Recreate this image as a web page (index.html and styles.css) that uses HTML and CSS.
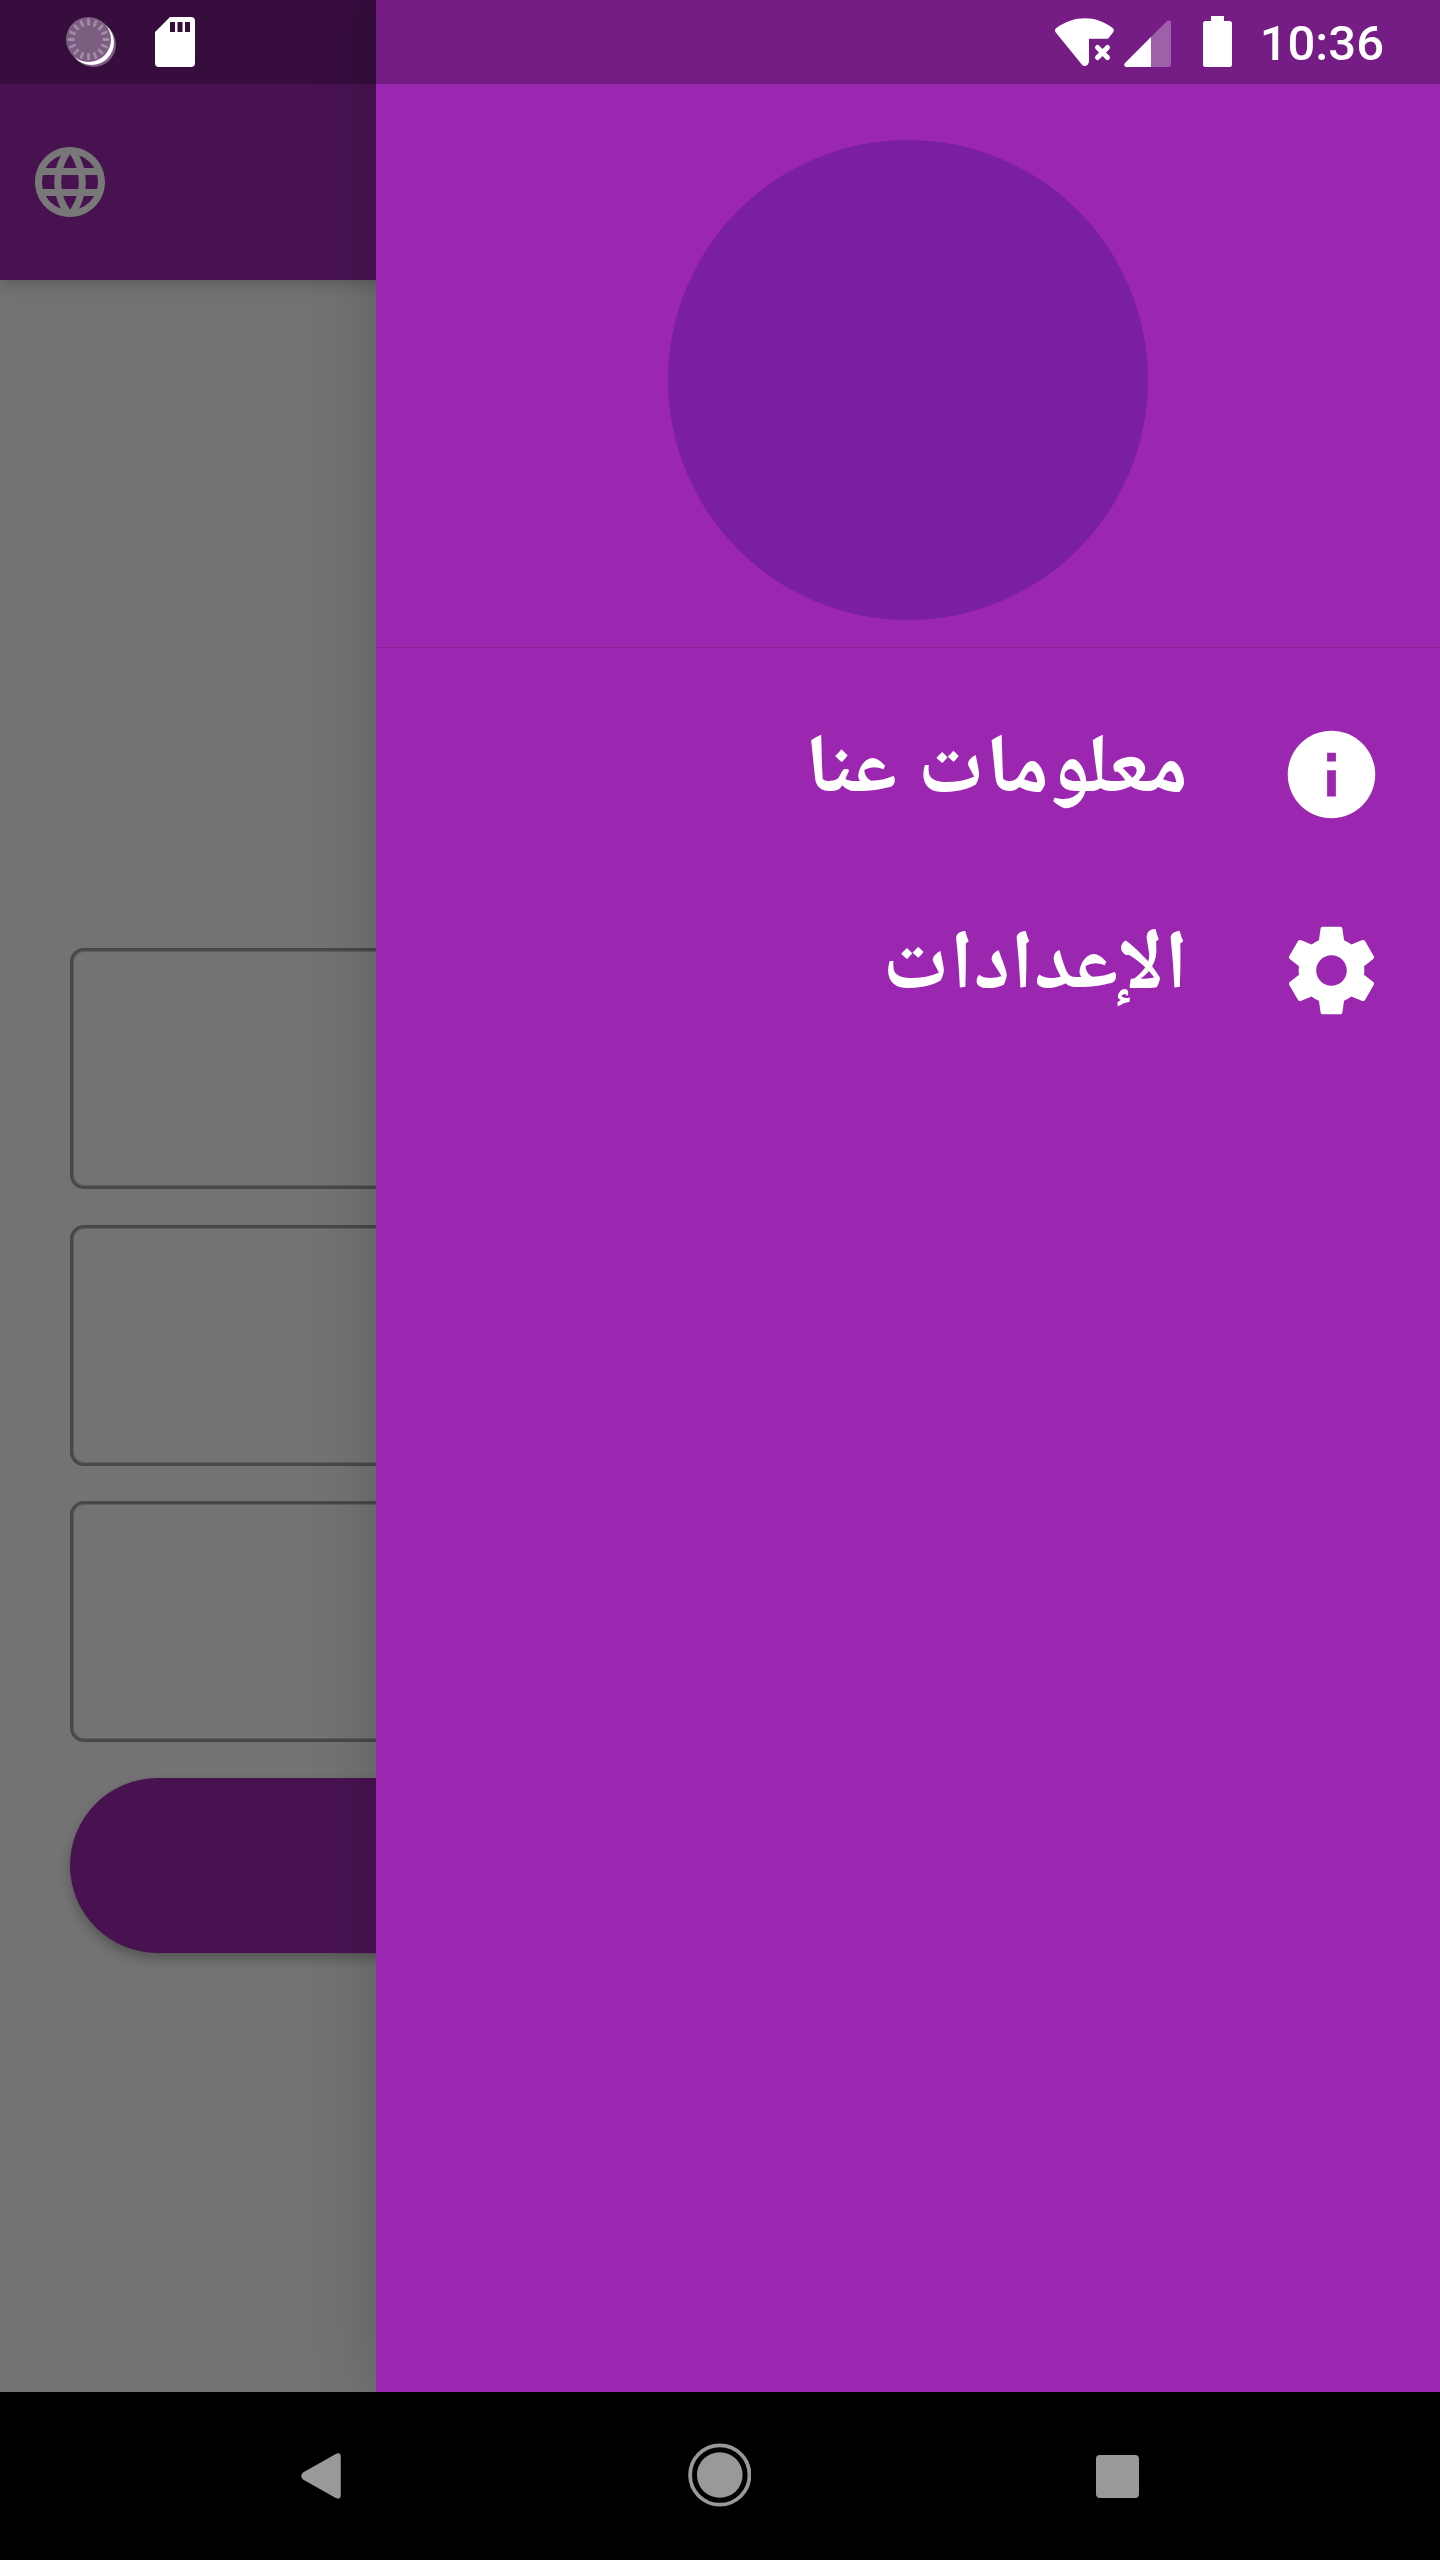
FILE: index.html
```html
<!DOCTYPE html>
<html lang="ar">
<head>
<meta charset="utf-8">
<title>القائمة</title>
<link rel="stylesheet" href="styles.css">
</head>
<body>
<div class="phone">
  <main class="page">
    <header class="app-bar">
      <svg class="globe" viewBox="0 0 24 24"><path d="M11.99 2C6.47 2 2 6.48 2 12s4.47 10 9.99 10C17.52 22 22 17.52 22 12S17.52 2 11.99 2zm6.93 6h-2.95c-.32-1.25-.78-2.45-1.38-3.56 1.84.63 3.37 1.91 4.33 3.56zM12 4.04c.83 1.2 1.48 2.53 1.91 3.96h-3.82c.43-1.43 1.08-2.76 1.91-3.96zM4.26 14C4.1 13.36 4 12.69 4 12s.1-1.36.26-2h3.38c-.08.66-.14 1.32-.14 2s.06 1.34.14 2H4.26zm.82 2h2.95c.32 1.25.78 2.45 1.38 3.56-1.84-.63-3.37-1.9-4.33-3.56zm2.95-8H5.08c.96-1.66 2.49-2.93 4.33-3.56C8.81 5.55 8.35 6.75 8.03 8zM12 19.96c-.83-1.2-1.48-2.53-1.91-3.96h3.82c-.43 1.43-1.08 2.76-1.91 3.96zM14.34 14H9.66c-.09-.66-.16-1.32-.16-2s.07-1.35.16-2h4.68c.09.65.16 1.32.16 2s-.07 1.34-.16 2zm.25 5.56c.6-1.11 1.06-2.31 1.38-3.56h2.95c-.96 1.65-2.49 2.93-4.33 3.56zM16.36 14c.08-.66.14-1.32.14-2s-.06-1.34-.14-2h3.38c.16.64.26 1.31.26 2s-.1 1.36-.26 2h-3.38z"/></svg>
    </header>
    <form class="form">
      <div class="field"></div>
      <div class="field"></div>
      <div class="field"></div>
      <div class="submit"></div>
    </form>
  </main>
  <aside class="drawer" dir="rtl">
    <div class="drawer-header"><div class="avatar"></div></div>
    <nav class="menu">
      <a class="menu-item">
        <svg class="menu-icon" viewBox="0 0 24 24"><path d="M12 2C6.48 2 2 6.48 2 12s4.48 10 10 10 10-4.48 10-10S17.52 2 12 2zm1 15h-2v-6h2v6zm0-8h-2V7h2v2z"/></svg>
        <span class="menu-label">معلومات عنا</span>
      </a>
      <a class="menu-item">
        <svg class="menu-icon" viewBox="0 0 24 24"><path d="M19.43 12.98c.04-.32.07-.64.07-.98s-.03-.66-.07-.98l2.11-1.65c.19-.15.24-.42.12-.64l-2-3.46c-.12-.22-.39-.3-.61-.22l-2.49 1c-.52-.4-1.08-.73-1.69-.98l-.38-2.65C14.46 2.18 14.25 2 14 2h-4c-.25 0-.46.18-.49.42l-.38 2.65c-.61.25-1.17.59-1.69.98l-2.49-1c-.23-.09-.49 0-.61.22l-2 3.46c-.13.22-.07.49.12.64l2.11 1.65c-.04.32-.07.65-.07.98s.03.66.07.98l-2.11 1.65c-.19.15-.24.42-.12.64l2 3.46c.12.22.39.3.61.22l2.49-1c.52.4 1.08.73 1.69.98l.38 2.65c.03.24.24.42.49.42h4c.25 0 .46-.18.49-.42l.38-2.65c.61-.25 1.17-.59 1.69-.98l2.49 1c.23.09.49 0 .61-.22l2-3.46c.12-.22.07-.49-.12-.64l-2.11-1.65zM12 15.5c-1.93 0-3.5-1.57-3.5-3.5s1.57-3.5 3.5-3.5 3.500 1.57 3.500 3.5-1.570 3.500-3.500 3.500z"/></svg>
        <span class="menu-label">الإعدادات</span>
      </a>
    </nav>
  </aside>
  <div class="status-bar">
    <div class="status-left">
      <svg class="sync" viewBox="0 0 50 50">
        <circle cx="27.500" cy="27.500" r="22.500" fill="#7b5e80"/>
        <circle cx="25.500" cy="25.500" r="22.500" fill="#fff"/>
        <circle cx="22.500" cy="22.500" r="22.500" fill="#7b5e80"/>
        <g stroke="#a18ba5" stroke-width="2.800" stroke-linecap="round">
          <path d="M37.500 22.500H42"/>
          <path d="M37.500 22.500H42" transform="rotate(22.500 22.500 22.500)"/>
          <path d="M37.500 22.500H42" transform="rotate(45 22.500 22.500)"/>
          <path d="M37.500 22.500H42" transform="rotate(67.500 22.500 22.500)"/>
          <path d="M37.500 22.500H42" transform="rotate(90 22.500 22.500)"/>
          <path d="M37.500 22.500H42" transform="rotate(112.500 22.500 22.500)"/>
          <path d="M37.500 22.500H42" transform="rotate(135 22.500 22.500)"/>
          <path d="M37.500 22.500H42" transform="rotate(157.500 22.500 22.500)"/>
          <path d="M37.500 22.500H42" transform="rotate(180 22.500 22.500)"/>
          <path d="M37.500 22.500H42" transform="rotate(202.500 22.500 22.500)"/>
          <path d="M37.500 22.500H42" transform="rotate(225 22.500 22.500)"/>
          <path d="M37.500 22.500H42" transform="rotate(247.500 22.500 22.500)"/>
          <path d="M37.500 22.500H42" transform="rotate(270 22.500 22.500)"/>
          <path d="M37.500 22.500H42" transform="rotate(292.500 22.500 22.500)"/>
          <path d="M37.500 22.500H42" transform="rotate(315 22.500 22.500)"/>
          <path d="M37.500 22.500H42" transform="rotate(337.500 22.500 22.500)"/>
        </g>
      </svg>
      <svg class="sd" viewBox="0 0 40 50"><path fill-rule="evenodd" d="M15 0H36a4 4 0 0 1 4 4V46a4 4 0 0 1-4 4H4a4 4 0 0 1-4-4V15zM15 5v10h5V5zM22.500 5v10h5V5zM30 5v10h5V5z"/></svg>
    </div>
    <div class="status-right">
      <svg class="wifi" viewBox="0 0 60 50"><path d="M.8 14.500Q-1.300 11.500 1.700 9.800C19-3 41-3 57.300 9.800Q60 11.500 58 14.500L53 20.700H34V43.500Q33 48 29.500 48Q27.500 48 26 45.500Z"/><path d="M42.500 29.500L52.500 39.500M52.500 29.500L42.500 39.500" fill="none" stroke="#fff" stroke-width="5" stroke-linecap="round"/></svg>
      <svg class="signal" viewBox="0 0 47 47"><path opacity=".3" d="M27 17L43 1Q47-1 47 4V44Q47 47 44 47H27Z"/><path d="M27 17V47H2Q-1 46 1 43Z"/></svg>
      <svg class="battery" viewBox="0 0 29 51"><path d="M8 0H21V5H26.500A2.500 2.500 0 0 1 29 7.500V48.500A2.500 2.500 0 0 1 26.500 51H2.500A2.500 2.500 0 0 1 0 48.500V7.500A2.500 2.500 0 0 1 2.500 5H8Z"/></svg>
      <span class="clock">10:36</span>
    </div>
  </div>
  <div class="nav-bar">
    <svg class="back" viewBox="0 0 40 46"><path d="M34.500 1Q40-1.800 40 3.500V42.500Q40 47.500 34.500 45L2 26.500Q-1.500 23 2 19.500Z"/></svg>
    <svg class="home" viewBox="0 0 64 64"><circle cx="32" cy="32" r="29.900" fill="none" stroke="#999" stroke-width="3.800"/><circle cx="32" cy="32" r="23"/></svg>
    <div class="recent"></div>
  </div>
</div>
</body>
</html>
```
FILE: styles.css
```css
* { box-sizing: border-box; }
body { margin: 0; background: #000; }
svg { display: block; fill: #fff; }

.phone {
  position: relative;
  width: 1440px;
  height: 2560px;
  overflow: hidden;
  display: flex;
  flex-direction: column;
}

.page { flex: 1; background: #737373; }
.app-bar {
  height: 280px;
  padding: 140px 28px 0;
  background: #481251;
  box-shadow: 0 4px 16px rgba(0, 0, 0, .22);
}
.globe { width: 84px; height: 84px; fill: #787878; }

.form {
  display: flex;
  flex-direction: column;
  gap: 35.500px;
  padding: 668px 70px 0;
}
.field {
  height: 241px;
  border: 3px solid #484848;
  border-radius: 14px;
  box-shadow: inset 0 0 0 1px #5f5f5f;
}
.submit {
  height: 175px;
  border-radius: 88px;
  background: #481251;
  box-shadow: 0 6px 12px rgba(0, 0, 0, .26);
}

.drawer {
  position: absolute;
  top: 0;
  right: 0;
  width: 1064px;
  height: 2392px;
  background: #9b27b0;
  box-shadow: 0 0 60px rgba(0, 0, 0, .18);
}
.drawer-header {
  height: 648px;
  padding-top: 140px;
  border-bottom: 1px solid #8a2399;
}
.avatar {
  width: 480px;
  height: 480px;
  margin: 0 auto;
  border-radius: 50%;
  background: #7b1fa2;
}
.menu { padding-top: 28px; }
.menu-item {
  display: flex;
  align-items: center;
  height: 196px;
  padding: 0 56px;
}
.menu-icon { width: 105px; height: 105px; }
.menu-label {
  margin: 0 91px 2px 0;
  color: #fff;
  font: bold 84px "Noto Naskh Arabic", "DejaVu Sans Mono", monospace;
  word-spacing: 2px;
  white-space: nowrap;
}

.status-bar {
  position: absolute;
  top: 0;
  left: 0;
  width: 100%;
  height: 84px;
  display: flex;
  justify-content: space-between;
  background: rgba(0, 0, 0, .243);
}
.status-left { display: flex; gap: 39px; padding: 17px 0 0 66px; }
.sync { width: 50px; height: 50px; }
.sd { width: 40px; height: 50px; }
.status-right { display: flex; padding-right: 56px; }
.wifi { width: 60px; height: 50px; margin: 18px 9px 0 0; }
.signal { width: 47px; height: 47px; margin: 20px 32px 0 0; }
.battery { width: 29px; height: 51px; margin: 16px 28px 0 0; }
.clock {
  color: #fff;
  font: 500 49px/84px Roboto, sans-serif;
  padding-top: 2px;
}

.nav-bar {
  display: flex;
  align-items: center;
  height: 168px;
  padding: 0 301px;
  background: #000;
}
.nav-bar svg { fill: #999; }
.back { width: 40px; height: 46px; }
.home { width: 64px; height: 64px; margin: 0 0 2px 347px; }
.recent {
  width: 43px;
  height: 43px;
  margin-left: 345px;
  border-radius: 4px;
  background: #999;
}
```
